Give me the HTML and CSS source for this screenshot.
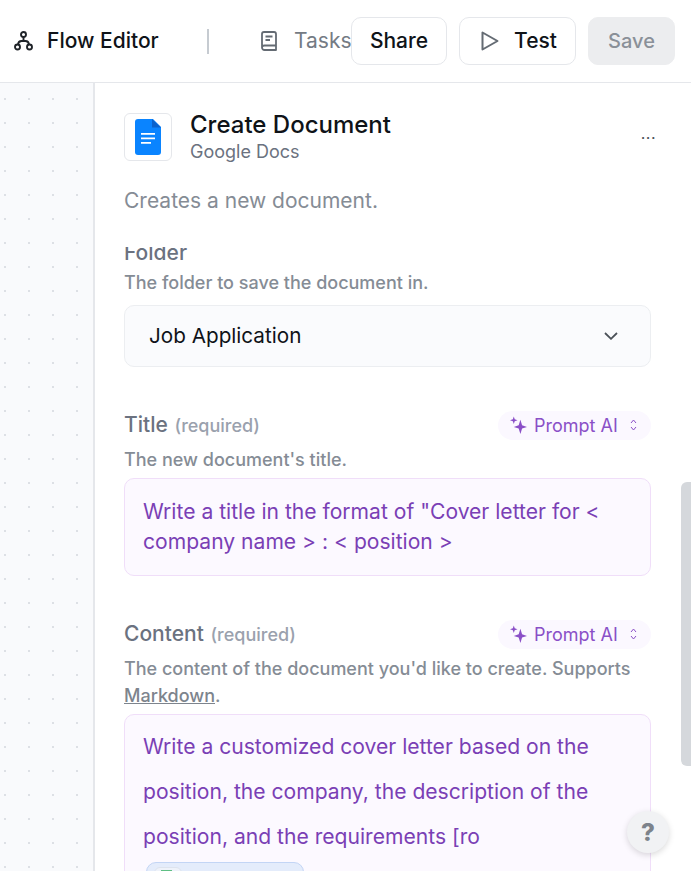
FILE: index.html
```html
<!DOCTYPE html>
<html lang="en">
<head>
    <meta charset="UTF-8">
    <meta name="viewport" content="width=device-width, initial-scale=1.0">
    <title>Flow Editor</title>
    <link rel="stylesheet" href="styles.css">
</head>
<body>
    <!-- Top bar -->
    <header class="topbar">
        <div class="topbar-left">
            <svg class="flow-icon" viewBox="0 0 19 20" fill="none" stroke="#1f2328" stroke-width="1.900">
                <circle cx="9.500" cy="3.500" r="2.500"/>
                <circle cx="3.500" cy="16" r="2.500"/>
                <circle cx="15.500" cy="16" r="2.500"/>
                <path d="M9.500 6v4M4 13.500C4.300 11 5.500 10 7.500 10h4c2 0 3.200 1 3.500 3.500"/>
            </svg>
            <span class="flow-title">Flow Editor</span>
            <span class="divider"></span>
            <svg class="book-icon" viewBox="0 0 16 20" fill="none" stroke="#646b73" stroke-width="1.800" stroke-linejoin="round">
                <path d="M1 16.500V3c0-1.100.9-2 2-2h10c1.100 0 2 .9 2 2v16H3.500C2.100 19 1 17.900 1 16.500S2.100 14.500 3.500 14.500H15"/>
                <path d="M4.500 5.500h7M4.500 9h4.500"/>
            </svg>
            <span class="tasks">Tasks</span>
        </div>
        <div class="topbar-actions">
            <button class="btn btn-share">Share</button>
            <button class="btn btn-test">
                <svg class="play-icon" viewBox="0 0 18 20" fill="none" stroke="#646b73" stroke-width="2" stroke-linejoin="round">
                    <path d="M1.500 1.500v17L16.500 10z"/>
                </svg>
                Test
            </button>
            <button class="btn btn-save">Save</button>
        </div>
    </header>

    <div class="main">
        <!-- Canvas -->
        <div class="canvas"></div>

        <!-- Side panel -->
        <section class="panel">
            <div class="step-head">
                <div class="step-logo">
                    <svg viewBox="0 0 26 36" width="26" height="36">
                        <path d="M3 0h15l8 8v25a3 3 0 0 1-3 3H3a3 3 0 0 1-3-3V3a3 3 0 0 1 3-3z" fill="#0a84ff"/>
                        <path d="M17 0l9 8.500h-9z" fill="#0b62cc"/>
                        <path d="M6 14h14v1.800H6zM6 18.500h14v1.800H6zM6 23h10v1.800H6z" fill="#fff"/>
                    </svg>
                </div>
                <div class="step-names">
                    <h1>Create Document</h1>
                    <p>Google Docs</p>
                </div>
                <span class="more">...</span>
            </div>
            <p class="step-desc">Creates a new document.</p>

            <div class="fields">
                <div class="fields-inner">
                    <div class="label-row">
                        <span class="label">Folder</span>
                    </div>
                    <p class="hint">The folder to save the document in.</p>
                    <div class="select">
                        <span>Job Application</span>
                        <svg viewBox="0 0 14 8" width="14" height="8" fill="none" stroke="#4b5158" stroke-width="1.800">
                            <path d="M1 1l6 5.800L13 1"/>
                        </svg>
                    </div>

                    <div class="label-row row-title">
                        <span class="label">Title <em>(required)</em></span>
                        <span class="prompt-ai">
                            <svg class="spark" viewBox="0 0 18 18" fill="#8a4fc7">
                                <path d="M11 3.500l1.800 5.700 5.200 1.800-5.200 1.800L11 18.500l-1.800-5.700L4 11l5.200-1.800z"/>
                                <path d="M4 0l1 3 3 1-3 1-1 3-1-3-3-1 3-1z"/>
                            </svg>
                            Prompt AI
                            <svg class="updown" viewBox="0 0 7 12" fill="none" stroke="#8a4fc7" stroke-width="1">
                                <path d="M1 4l2.500-3L6 4M1 8l2.500 3L6 8"/>
                            </svg>
                        </span>
                    </div>
                    <p class="hint hint-after-row">The new document's title.</p>
                    <div class="prompt-box box-title">Write a title in the format of "Cover letter for &lt; company name &gt; : &lt; position &gt;</div>

                    <div class="label-row row-content">
                        <span class="label">Content <em>(required)</em></span>
                        <span class="prompt-ai">
                            <svg class="spark" viewBox="0 0 18 18" fill="#8a4fc7">
                                <path d="M11 3.500l1.800 5.700 5.200 1.800-5.200 1.800L11 18.500l-1.800-5.700L4 11l5.200-1.800z"/>
                                <path d="M4 0l1 3 3 1-3 1-1 3-1-3-3-1 3-1z"/>
                            </svg>
                            Prompt AI
                            <svg class="updown" viewBox="0 0 7 12" fill="none" stroke="#8a4fc7" stroke-width="1">
                                <path d="M1 4l2.500-3L6 4M1 8l2.500 3L6 8"/>
                            </svg>
                        </span>
                    </div>
                    <p class="hint hint-after-row">The content of the document you'd like to create. Supports <a href="#">Markdown</a>.</p>
                    <div class="prompt-box box-content">
                        Write a customized cover letter based on the position, the company, the description of the position, and the requirements [ro
                        <div class="chip"><span class="chip-inner"><span class="chip-icon"></span></span></div>
                    </div>
                </div>
            </div>

            <div class="scrollbar"></div>
            <button class="help">?</button>
        </section>
    </div>
</body>
</html>
```

FILE: styles.css
```css
* {
    margin: 0;
    padding: 0;
    box-sizing: border-box;
}

html, body {
    height: 100%;
    overflow: hidden;
}

body {
    font-family: Inter, "Liberation Sans", sans-serif;
    background-color: #fff;
    color: #0f1318;
}

/* Top bar */
.topbar {
    height: 83px;
    display: flex;
    align-items: center;
    justify-content: space-between;
    padding: 0 16px 0 14px;
    border-bottom: 1px solid #e5e7eb;
    background-color: #fff;
}

.topbar-left {
    display: flex;
    align-items: center;
}

.flow-icon {
    width: 19px;
    height: 20px;
    margin-right: 14px;
}

.flow-title {
    font-size: 21px;
    line-height: 24px;
    font-weight: 500;
    width: 112px;
    white-space: nowrap;
}

.divider {
    width: 2px;
    height: 25px;
    background-color: #c6cbd1;
    margin-left: 48px;
    margin-right: 52px;
}

.book-icon {
    width: 16px;
    height: 20px;
    margin-right: 17px;
}

.tasks {
    font-size: 21px;
    line-height: 24px;
    color: #747b84;
    width: 57px;
}

.topbar-actions {
    display: flex;
    gap: 12px;
}

.btn {
    height: 48px;
    font-family: inherit;
    font-size: 21px;
    line-height: 24px;
    font-weight: 500;
    border: 1px solid #e5e7eb;
    border-radius: 10px;
    background-color: #fff;
    color: #0f1318;
    display: flex;
    align-items: center;
    justify-content: center;
}

.btn-share {
    width: 96px;
}

.btn-test {
    width: 117px;
    gap: 15px;
    padding-left: 3px;
}

.play-icon {
    width: 18px;
    height: 20px;
}

.btn-save {
    width: 87px;
    font-size: 20px;
    background-color: #ecedef;
    border-color: #ecedef;
    color: #8a9098;
}

/* Canvas and panel */
.main {
    display: flex;
    height: 788px;
}

.canvas {
    width: 93px;
    background-color: #f9fafc;
    background-image: radial-gradient(circle, #dde0e5 0.8px, transparent 1px);
    background-size: 24px 24px;
    background-position: -7px 4px;
}

.panel {
    position: relative;
    flex: 1;
    border-left: 2px solid #e5e7eb;
    padding: 30px 40px 0 29px;
    display: flex;
    flex-direction: column;
    overflow: hidden;
}

.step-head {
    display: flex;
    align-items: flex-start;
}

.step-logo {
    width: 48px;
    height: 48px;
    border: 1px solid #e5e7eb;
    border-radius: 6px;
    display: flex;
    align-items: center;
    justify-content: center;
    margin-right: 18px;
}

.step-names {
    flex: 1;
}

.step-names h1 {
    font-size: 24px;
    font-weight: 500;
    line-height: 24px;
}

.step-names p {
    font-size: 18px;
    line-height: 22px;
    margin-top: 4px;
    color: #6b7280;
}

.more {
    font-size: 16px;
    letter-spacing: 0.5px;
    color: #4b5158;
    line-height: 16px;
    margin-top: 12px;
    margin-right: -5px;
}

.step-desc {
    font-size: 21px;
    line-height: 28px;
    color: #858c95;
    margin-top: 24px;
}

/* The form scrolls under the step header, so "Folder" is clipped at the top */
.fields {
    flex: 1;
    overflow: hidden;
    margin-top: 32px;
}

.fields-inner {
    margin-top: -8px;
}

.label-row {
    display: flex;
    align-items: center;
    justify-content: space-between;
    height: 28px;
}

.label {
    font-size: 21px;
    line-height: 24px;
    font-weight: 500;
    color: #6b7280;
}

.label em {
    font-style: normal;
    font-size: 18px;
    margin-left: 1px;
    color: #9aa1ad;
}

.hint {
    font-size: 18px;
    line-height: 27px;
    font-weight: 500;
    color: #858c95;
    margin-top: 2px;
}

.hint-after-row {
    margin-top: 7px;
}

.hint a {
    color: #7d848d;
}

.select {
    margin-top: 9px;
    height: 62px;
    background-color: #fafbfd;
    border: 1px solid #eceef1;
    border-radius: 10px;
    padding: 0 32px 0 24px;
    display: flex;
    align-items: center;
    justify-content: space-between;
    font-size: 20.700px;
    line-height: 24px;
}

.row-title {
    margin-top: 44px;
}

.row-content {
    margin-top: 44px;
}

.prompt-ai {
    height: 29px;
    width: 153px;
    border-radius: 15px;
    background-color: #fbf8ff;
    color: #8a4fc7;
    font-size: 18px;
    display: flex;
    align-items: center;
    padding-left: 12px;
    gap: 7px;
    white-space: nowrap;
}

.spark {
    width: 17px;
    height: 18px;
    overflow: visible;
}

.updown {
    width: 7px;
    height: 12px;
    margin-left: 5px;
}

.prompt-box {
    border: 1px solid #f0def9;
    border-radius: 10px;
    background-color: #fcf9ff;
    color: #7a3fb5;
    font-size: 21.100px;
}

.box-title {
    margin-top: 5px;
    height: 98px;
    padding: 18px 18px;
    line-height: 30px;
}

.box-content {
    margin-top: 5px;
    height: 260px;
    padding: 9px 18px;
    line-height: 45px;
}

.chip {
    width: 158px;
    height: 30px;
    margin: 3px 0 0 3px;
    background-color: #e4ecfb;
    border: 1px solid #c3d5f5;
    border-radius: 10px;
    padding: 4px 7px;
}

.chip-inner {
    display: block;
    width: 28px;
    height: 20px;
    background-color: #eef2fa;
    border: 1px solid #dde3ee;
    border-radius: 6px;
    padding: 2px 6px;
}

.chip-icon {
    display: block;
    width: 11px;
    height: 14px;
    background-color: #5fbf84;
}

/* Floating bits */
.scrollbar {
    position: absolute;
    top: 399px;
    right: 0;
    width: 10px;
    height: 284px;
    background-color: #d5d8dc;
    border-radius: 6px 0 0 6px;
}

.help {
    position: absolute;
    top: 728px;
    right: 22px;
    width: 42px;
    height: 42px;
    border-radius: 50%;
    border: none;
    background-color: #f1f2f4;
    box-shadow: 0 2px 6px rgba(0, 0, 0, 0.15);
    color: #7d838b;
    font-family: inherit;
    font-size: 24px;
    font-weight: 800;
}
```
